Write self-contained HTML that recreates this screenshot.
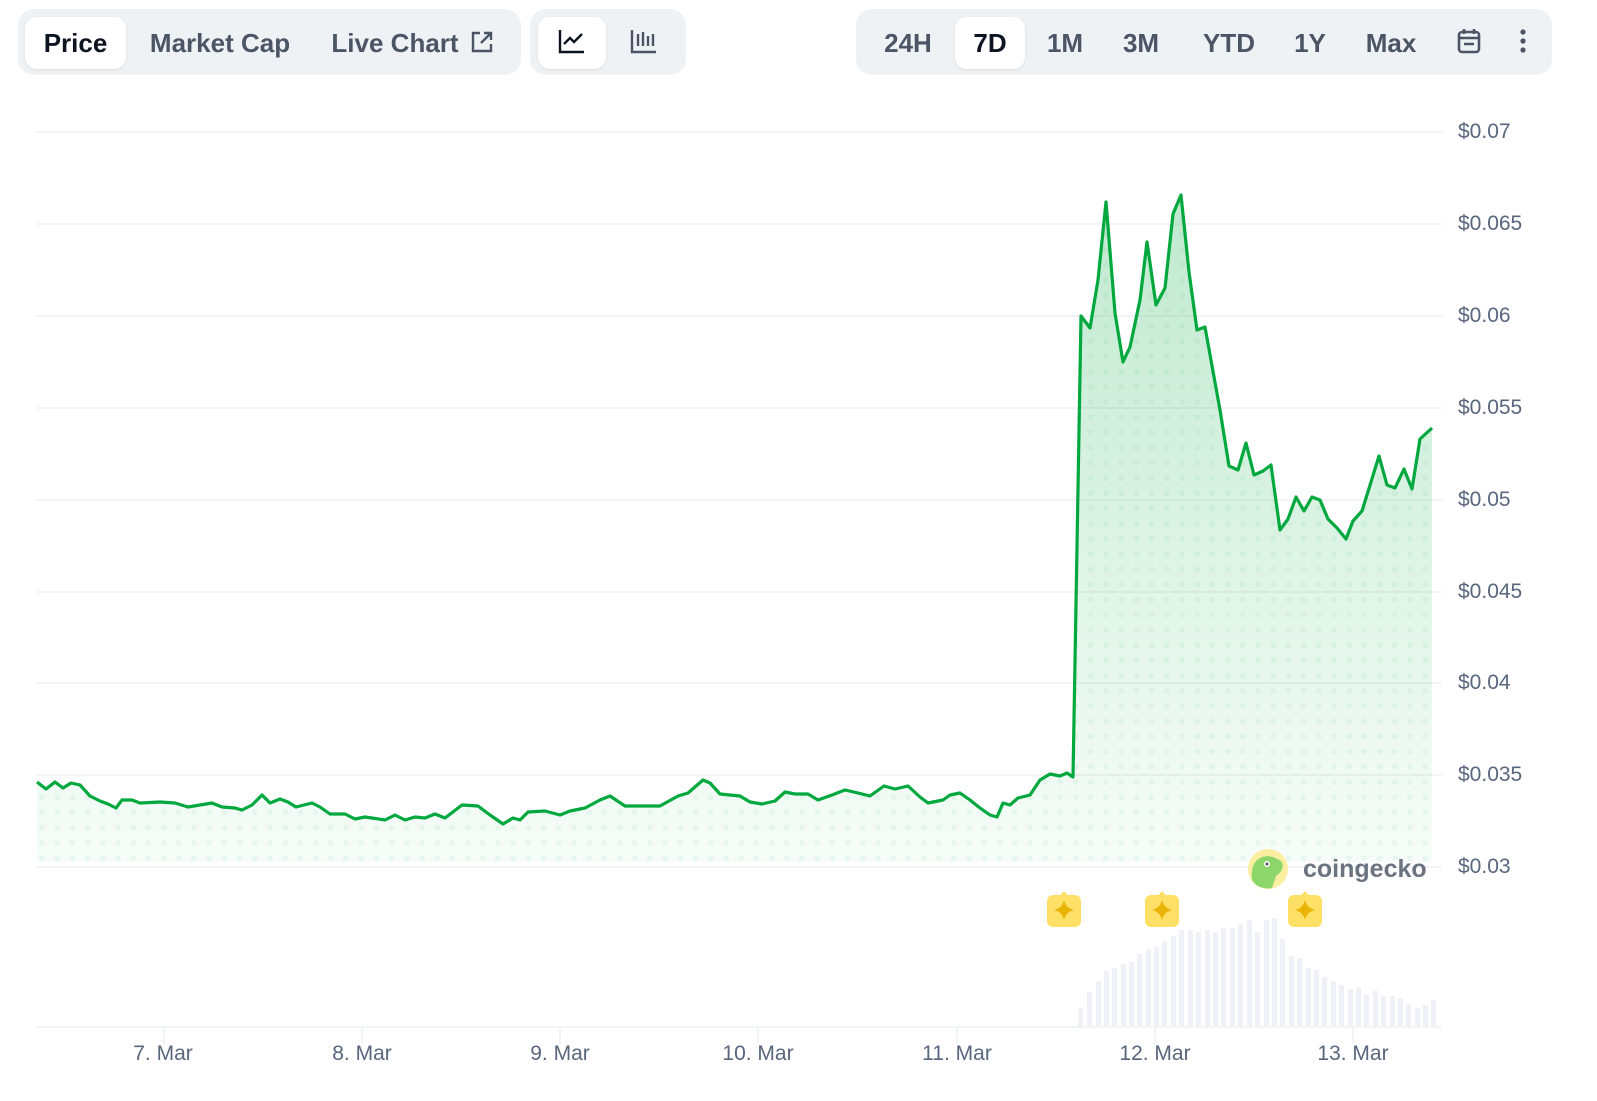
<!DOCTYPE html>
<html><head><meta charset="utf-8"><style>
body{margin:0;width:1597px;height:1101px;background:#fff;font-family:"Liberation Sans",sans-serif;position:relative;overflow:hidden}
.grp{position:absolute;background:#eff2f5;border-radius:16px;height:66px;top:9px}
.b{position:absolute;top:17px;height:52px;line-height:52px;font-size:26px;font-weight:700;color:#4b5565;text-align:center}
.w{background:#fff;border-radius:12px;box-shadow:0 1px 3px rgba(0,0,0,.08);color:#0d1421}
.yl{position:absolute;left:1458px;font-size:21px;color:#58667e}
.xl{position:absolute;top:1042px;font-size:21px;color:#58667e;width:120px;text-align:center}
</style></head><body>
<div class="grp" style="left:18px;width:503px"></div>
<div class="b w" style="left:25px;width:101px">Price</div>
<div class="b" style="left:140px;width:160px">Market Cap</div>
<div class="b" style="left:325px;width:140px">Live Chart</div>
<svg style="position:absolute;left:470px;top:30px" width="24" height="24" viewBox="0 0 24 24" fill="none" stroke="#4b5565" stroke-width="2.4"><path d="M10 3H3v18h18v-7M14 3h7v7M21 3l-10 10"/></svg>
<div class="grp" style="left:530px;width:156px"></div>
<div class="b w" style="left:538px;width:68px"></div>
<svg style="position:absolute;left:558px;top:28px" width="28" height="26" viewBox="0 0 28 26" fill="none" stroke="#0d1421" stroke-width="2.4"><path d="M2 2v22h24M6 16l6-6 4 4 8-8"/></svg>
<svg style="position:absolute;left:630px;top:28px" width="28" height="26" viewBox="0 0 28 26" fill="none" stroke="#4b5565" stroke-width="2.4"><path d="M2 2v22h24M8 6v12M13 4v14M18 8v10M23 6v12"/></svg>
<div class="grp" style="left:856px;width:696px"></div>
<div class="b" style="left:872px;width:72px">24H</div>
<div class="b w" style="left:955px;width:70px">7D</div>
<div class="b" style="left:1035px;width:60px">1M</div>
<div class="b" style="left:1110px;width:62px">3M</div>
<div class="b" style="left:1190px;width:78px">YTD</div>
<div class="b" style="left:1282px;width:56px">1Y</div>
<div class="b" style="left:1355px;width:72px">Max</div>
<svg style="position:absolute;left:1456px;top:27px" width="26" height="28" viewBox="0 0 26 28" fill="none" stroke="#4b5565" stroke-width="2.6"><rect x="3" y="5" width="20" height="20" rx="3"/><path d="M8 2v5M18 2v5M3 11h20M8 17h10"/></svg>
<svg style="position:absolute;left:1516px;top:28px" width="14" height="28"><circle cx="7" cy="4" r="2.6" fill="#4b5565"/><circle cx="7" cy="13" r="2.6" fill="#4b5565"/><circle cx="7" cy="22" r="2.6" fill="#4b5565"/></svg>

<svg style="position:absolute;left:0;top:0" width="1597" height="1101">
<defs>
<linearGradient id="g2" x1="0" y1="190" x2="0" y2="867" gradientUnits="userSpaceOnUse"><stop offset="0" stop-color="#00a83e" stop-opacity="0.25"/><stop offset="1" stop-color="#00a83e" stop-opacity="0.03"/></linearGradient>
<pattern id="d" width="15.2" height="15.2" patternUnits="userSpaceOnUse" x="35" y="775"><circle cx="7" cy="7" r="3" fill="#00a83e" fill-opacity="0.06"/></pattern>
<clipPath id="cp"><path d="M37,782 L46,789 55,782 63,788 71,783 80,785 90,796 100,801 108,804 116,808 122,800 132,800 140,803 160,802 175,803 188,807 200,805 212,803 222,807 235,808 242,810 252,805 262,795 270,803 280,799 288,802 296,807 312,803 320,807 330,814 345,814 355,819 365,817 385,820 395,815 405,820 415,817 425,818 435,814 445,818 462,805 478,806 490,815 503,824 513,818 520,820 528,812 545,811 560,815 570,811 585,808 600,800 610,796 625,806 640,806 660,806 678,796 688,793 703,780 710,783 720,794 740,796 750,802 762,804 775,801 785,792 795,794 808,794 818,800 832,795 845,790 858,793 870,796 884,786 895,789 908,786 920,797 928,803 943,800 950,795 960,793 970,800 980,808 990,815 997,817 1003,803 1010,805 1018,798 1030,795 1040,780 1050,774 1060,776 1067,773 1073,777 1081,316 1090,328 1098,280 1106,202 1115,313 1123,362 1130,347 1140,300 1147,242 1156,305 1165,288 1173,214 1181,195 1189,272 1197,330 1205,327 1220,410 1229,466 1238,470 1246,443 1254,475 1263,471 1271,465 1280,530 1288,519 1296,497 1304,511 1312,497 1320,500 1328,519 1337,528 1346,539 1353,521 1362,511 1371,482 1379,456 1387,485 1395,488 1404,469 1412,489 1420,439 1432,428 L1432,862 L37,862 Z"/></clipPath>
</defs>
<g stroke="#eef0f3" stroke-width="1.5">
<line x1="36" x2="1442" y1="132" y2="132"/><line x1="36" x2="1442" y1="224" y2="224"/><line x1="36" x2="1442" y1="316" y2="316"/><line x1="36" x2="1442" y1="408" y2="408"/><line x1="36" x2="1442" y1="500" y2="500"/><line x1="36" x2="1442" y1="592" y2="592"/><line x1="36" x2="1442" y1="683" y2="683"/><line x1="36" x2="1442" y1="775" y2="775"/><line x1="36" x2="1442" y1="867" y2="867"/><line x1="36" x2="1442" y1="1027" y2="1027"/>
<line x1="164" x2="164" y1="1027" y2="1044"/><line x1="362" x2="362" y1="1027" y2="1044"/><line x1="560" x2="560" y1="1027" y2="1044"/><line x1="758" x2="758" y1="1027" y2="1044"/><line x1="957" x2="957" y1="1027" y2="1044"/><line x1="1155" x2="1155" y1="1027" y2="1044"/><line x1="1353" x2="1353" y1="1027" y2="1044"/>
</g>
<g fill="#eef1f5">
<rect x="1078" y="1008" width="5" height="19"/><rect x="1087" y="992" width="5" height="35"/><rect x="1096" y="981" width="5" height="46"/><rect x="1104" y="971" width="5" height="56"/><rect x="1112" y="968" width="5" height="59"/><rect x="1121" y="964" width="5" height="63"/><rect x="1129" y="962" width="5" height="65"/><rect x="1137" y="954" width="5" height="73"/><rect x="1146" y="949" width="5" height="78"/><rect x="1154" y="947" width="5" height="80"/><rect x="1162" y="941" width="5" height="86"/><rect x="1171" y="936" width="5" height="91"/><rect x="1179" y="930" width="5" height="97"/><rect x="1188" y="930" width="5" height="97"/><rect x="1196" y="932" width="5" height="95"/><rect x="1205" y="930" width="5" height="97"/><rect x="1213" y="932" width="5" height="95"/><rect x="1221" y="928" width="5" height="99"/><rect x="1230" y="928" width="5" height="99"/><rect x="1238" y="924" width="5" height="103"/><rect x="1247" y="920" width="5" height="107"/><rect x="1255" y="932" width="5" height="95"/><rect x="1264" y="920" width="5" height="107"/><rect x="1272" y="918" width="5" height="109"/><rect x="1280" y="939" width="5" height="88"/><rect x="1289" y="956" width="5" height="71"/><rect x="1297" y="958" width="5" height="69"/><rect x="1306" y="968" width="5" height="59"/><rect x="1314" y="970" width="5" height="57"/><rect x="1322" y="977" width="5" height="50"/><rect x="1331" y="981" width="5" height="46"/><rect x="1339" y="985" width="5" height="42"/><rect x="1348" y="989" width="5" height="38"/><rect x="1356" y="987" width="5" height="40"/><rect x="1364" y="995" width="5" height="32"/><rect x="1373" y="991" width="5" height="36"/><rect x="1381" y="996" width="5" height="31"/><rect x="1390" y="996" width="5" height="31"/><rect x="1398" y="998" width="5" height="29"/><rect x="1406" y="1004" width="5" height="23"/><rect x="1415" y="1008" width="5" height="19"/><rect x="1423" y="1005" width="5" height="22"/><rect x="1431" y="1000" width="5" height="27"/>
</g>
<g clip-path="url(#cp)">
<rect x="30" y="150" width="1410" height="720" fill="url(#g2)"/>
<rect x="30" y="150" width="1410" height="720" fill="url(#d)"/>
</g>
<polyline fill="none" stroke="#00a83e" stroke-width="3.2" stroke-linejoin="round" points="37,782 46,789 55,782 63,788 71,783 80,785 90,796 100,801 108,804 116,808 122,800 132,800 140,803 160,802 175,803 188,807 200,805 212,803 222,807 235,808 242,810 252,805 262,795 270,803 280,799 288,802 296,807 312,803 320,807 330,814 345,814 355,819 365,817 385,820 395,815 405,820 415,817 425,818 435,814 445,818 462,805 478,806 490,815 503,824 513,818 520,820 528,812 545,811 560,815 570,811 585,808 600,800 610,796 625,806 640,806 660,806 678,796 688,793 703,780 710,783 720,794 740,796 750,802 762,804 775,801 785,792 795,794 808,794 818,800 832,795 845,790 858,793 870,796 884,786 895,789 908,786 920,797 928,803 943,800 950,795 960,793 970,800 980,808 990,815 997,817 1003,803 1010,805 1018,798 1030,795 1040,780 1050,774 1060,776 1067,773 1073,777 1081,316 1090,328 1098,280 1106,202 1115,313 1123,362 1130,347 1140,300 1147,242 1156,305 1165,288 1173,214 1181,195 1189,272 1197,330 1205,327 1220,410 1229,466 1238,470 1246,443 1254,475 1263,471 1271,465 1280,530 1288,519 1296,497 1304,511 1312,497 1320,500 1328,519 1337,528 1346,539 1353,521 1362,511 1371,482 1379,456 1387,485 1395,488 1404,469 1412,489 1420,439 1432,428"/>
<g>
<g transform="translate(1064,910)"><path d="M-6,-12 L0,-19 6,-12 Z" fill="#ffe066"/><rect x="-17" y="-15" width="34" height="32" rx="6" fill="#ffe066"/><path d="M0,-10 Q2,-2 10,0 Q2,2 0,10 Q-2,2 -10,0 Q-2,-2 0,-10Z" fill="#eab308"/></g>
<g transform="translate(1162,910)"><path d="M-6,-12 L0,-19 6,-12 Z" fill="#ffe066"/><rect x="-17" y="-15" width="34" height="32" rx="6" fill="#ffe066"/><path d="M0,-10 Q2,-2 10,0 Q2,2 0,10 Q-2,2 -10,0 Q-2,-2 0,-10Z" fill="#eab308"/></g>
<g transform="translate(1305,910)"><path d="M-6,-12 L0,-19 6,-12 Z" fill="#ffe066"/><rect x="-17" y="-15" width="34" height="32" rx="6" fill="#ffe066"/><path d="M0,-10 Q2,-2 10,0 Q2,2 0,10 Q-2,2 -10,0 Q-2,-2 0,-10Z" fill="#eab308"/></g>
</g>
<circle cx="1268" cy="869" r="20" fill="#fbeea0"/>
<path d="M1252,880 Q1250,862 1262,857 Q1272,854 1282,862 Q1285,870 1276,876 L1272,888 Q1258,890 1252,880Z" fill="#8dd66b"/>
<circle cx="1267" cy="864" r="3" fill="#fff"/><circle cx="1267" cy="864" r="1.5" fill="#555"/>
<text x="1303" y="877" font-family="Liberation Sans" font-weight="700" font-size="25" fill="#6b7280">coingecko</text>
</svg>
<div class="yl" style="top:120px">$0.07</div>
<div class="yl" style="top:212px">$0.065</div>
<div class="yl" style="top:304px">$0.06</div>
<div class="yl" style="top:396px">$0.055</div>
<div class="yl" style="top:488px">$0.05</div>
<div class="yl" style="top:580px">$0.045</div>
<div class="yl" style="top:671px">$0.04</div>
<div class="yl" style="top:763px">$0.035</div>
<div class="yl" style="top:855px">$0.03</div>
<div class="xl" style="left:103px">7. Mar</div>
<div class="xl" style="left:302px">8. Mar</div>
<div class="xl" style="left:500px">9. Mar</div>
<div class="xl" style="left:698px">10. Mar</div>
<div class="xl" style="left:897px">11. Mar</div>
<div class="xl" style="left:1095px">12. Mar</div>
<div class="xl" style="left:1293px">13. Mar</div>
</body></html>
